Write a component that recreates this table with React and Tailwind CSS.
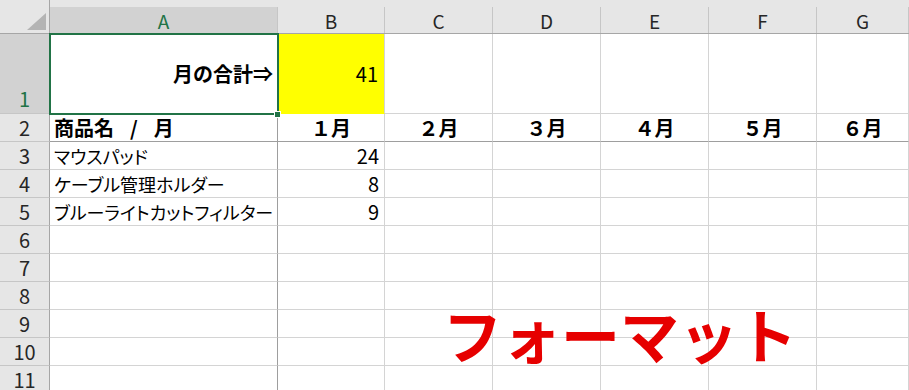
import React from "react";

const FONT = { fontFamily: '"Noto Sans CJK JP", "Noto Sans", sans-serif' };

const COLS = ["A", "B", "C", "D", "E", "F", "G"];
const MONTHS = ["１月", "２月", "３月", "４月", "５月", "６月"];

const ITEMS = [
  { name: "マウスパッド", qty: 24 },
  { name: "ケーブル管理ホルダー", qty: 8 },
  { name: "ブルーライトカットフィルター", qty: 9 },
];

function ColHeader({ label, selected }) {
  return (
    <div className="flex flex-col border-b border-[#a6a6a6] bg-[#e6e6e6]">
      <div className="h-[7px]" />
      <div
        className={
          "flex flex-1 items-center justify-center border-r border-[#c6c6c6] text-[19px] leading-none " +
          (selected ? "bg-[#d2d2d2] text-[#217346]" : "text-[#262626]")
        }
      >
        {label}
      </div>
    </div>
  );
}

function RowHeader({ n, selected, tall }) {
  return (
    <div
      className={
        "flex justify-center border-b border-r border-[#c6c6c6] border-r-[#a6a6a6] text-[20px] leading-none " +
        (tall ? "items-end pb-[4px] " : "items-center ") +
        (selected ? "bg-[#d2d2d2] text-[#217346]" : "bg-[#e6e6e6] text-[#262626]")
      }
    >
      {n}
    </div>
  );
}

function Cell({ children, className = "" }) {
  return (
    <div
      className={
        "flex items-center whitespace-nowrap border-b border-r border-[#d4d4d4] px-[4px] text-[20px] leading-none text-black " +
        className
      }
    >
      {children}
    </div>
  );
}

export default function App() {
  const emptyRows = [6, 7, 8, 9, 10, 11];
  return (
    <div
      className="relative h-[390px] w-[909px] overflow-hidden bg-white"
      style={FONT}
    >
      <div className="grid grid-cols-[50px_228px_107px_108px_108px_108px_108px_1fr] grid-rows-[34px_80px_repeat(10,28px)]">
        {/* select-all corner */}
        <div className="relative border-b border-r border-[#a6a6a6] bg-[#e6e6e6]">
          <svg
            className="absolute left-[27px] top-[13px]"
            width="19"
            height="17"
            viewBox="0 0 19 17"
          >
            <polygon points="19,0 19,17 0,17" fill="#b4b4b4" />
          </svg>
        </div>
        {COLS.map((c) => (
          <ColHeader key={c} label={c} selected={c === "A"} />
        ))}

        {/* row 1 */}
        <RowHeader n={1} selected tall />
        <Cell className="justify-end font-bold">月の合計⇒</Cell>
        <Cell className="justify-end border-b-[#ffff00] bg-[#ffff00] pr-[6px]">41</Cell>
        <Cell />
        <Cell />
        <Cell />
        <Cell />
        <Cell />

        {/* row 2 */}
        <RowHeader n={2} />
        <Cell className="border-b-[#9e9e9e] border-r-[#9e9e9e] font-bold">
          商品名
          <span className="mx-[16px]">/</span>月
        </Cell>
        {MONTHS.map((m) => (
          <Cell key={m} className="justify-center border-b-[#9e9e9e] font-bold">
            {m}
          </Cell>
        ))}

        {/* rows 3-5 */}
        {ITEMS.map((it, i) => (
          <React.Fragment key={it.name}>
            <RowHeader n={i + 3} />
            <Cell className="border-r-[#9e9e9e]">
              <span
                className="text-[18px]"
                style={{ fontFeatureSettings: '"palt"' }}
              >
                {it.name}
              </span>
            </Cell>
            <Cell className="justify-end pr-[5px]">{it.qty}</Cell>
            <Cell />
            <Cell />
            <Cell />
            <Cell />
            <Cell />
          </React.Fragment>
        ))}

        {/* rows 6-11 */}
        {emptyRows.map((n) => (
          <React.Fragment key={n}>
            <RowHeader n={n} />
            <Cell className="border-r-[#9e9e9e]" />
            <Cell />
            <Cell />
            <Cell />
            <Cell />
            <Cell />
            <Cell />
          </React.Fragment>
        ))}
      </div>

      {/* active cell frame with fill handle */}
      <div className="pointer-events-none absolute left-[49px] top-[33px] h-[82px] w-[230px] border-2 border-[#217346]" />
      <div className="pointer-events-none absolute left-[274px] top-[111px] h-[7px] w-[7px] border border-white bg-[#217346]" />

      {/* floating title text */}
      <div className="pointer-events-none absolute left-[443px] top-[304px] whitespace-nowrap text-[59px] font-bold leading-none text-[#e60000]">
        フォーマット
      </div>
    </div>
  );
}
